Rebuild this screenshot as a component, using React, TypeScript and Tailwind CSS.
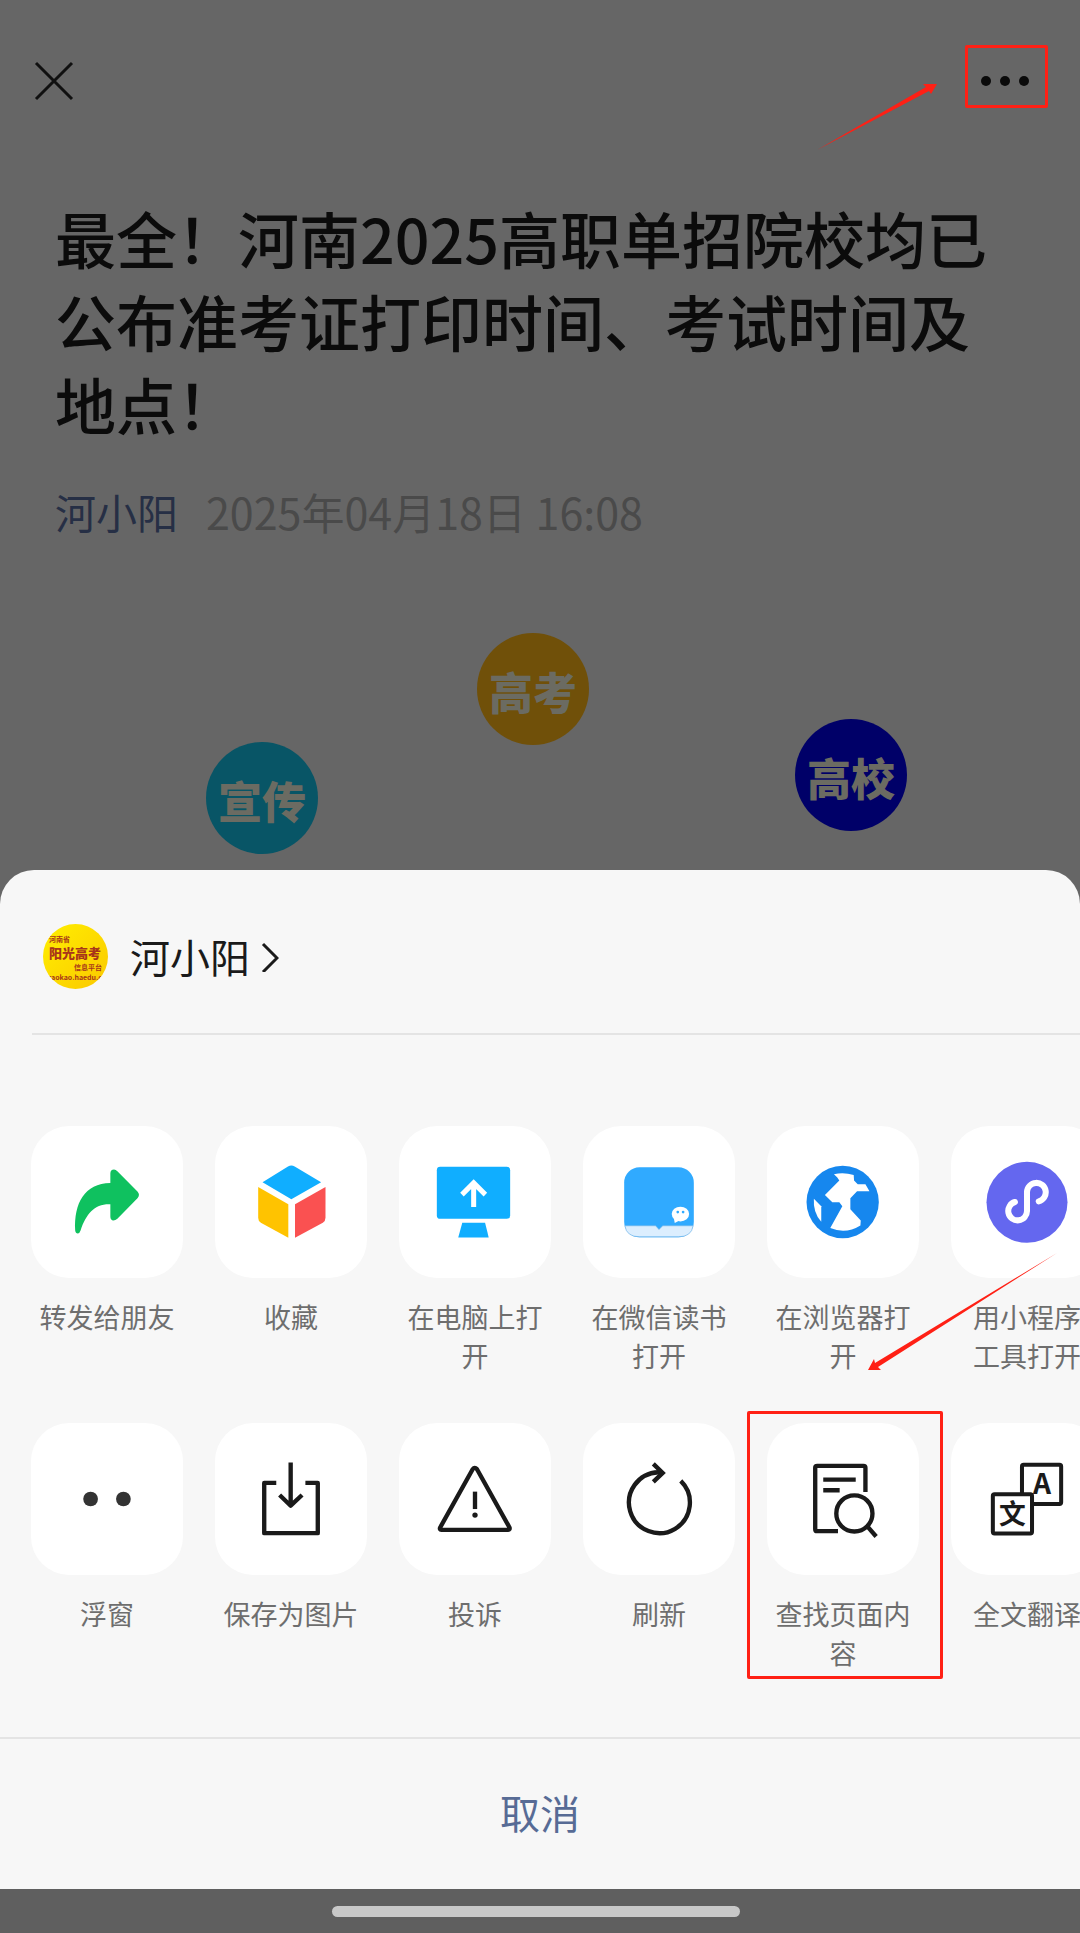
import React from 'react';

interface Action {
  label: string;
  icon: React.ReactNode;
  highlighted?: boolean;
}

const INK = '#1a1a1a';

const ShareIcon = () => (
  <path
    fill="#0fc15f"
    d="M237 170V142Q237 130 248 130Q253 130 258 135L318 196Q327 206 318 216L258 277Q252 282 246 282Q237 281 237 270V234C190 232 165 262 148 312Q145 321 140 321Q133 321 132 312C128 230 160 172 237 170Z"
  />
);

const FavoriteIcon = () => (
  <>
    <path fill="#10aeff" d="M142 168L218 121Q228 115 238 121L317 168L228 219Z" />
    <path fill="#ffc300" d="M129 182L219 234V334L137 289Q129 284 129 274Z" />
    <path fill="#fa5151" d="M330 182L239 234V334L322 289Q330 284 330 274Z" />
  </>
);

const DesktopIcon = () => (
  <>
    <rect x="113" y="122" width="219" height="155" rx="10" fill="#10aeff" />
    <path fill="#10aeff" d="M189 289H257L268 333H177Z" />
    <path d="M223 242V168M188 205L223 170L258 205" fill="none" stroke="#fff" strokeWidth="15" />
  </>
);

const ReadingIcon = () => (
  <>
    <rect x="123" y="123" width="208" height="209" rx="46" fill="#30aaff" />
    <path d="M125 298H217L227 309L238 298H329Q324 331 285 331H169Q130 331 125 298Z" fill="#dceefe" stroke="#70b4e8" strokeWidth="2" />
    <ellipse cx="291" cy="263" rx="26" ry="22" fill="#fff" />
    <path d="M271 274L274 290L288 282Z" fill="#fff" />
    <circle cx="283" cy="257" r="4" fill="#30aaff" />
    <circle cx="299" cy="257" r="4" fill="#30aaff" />
  </>
);

const BrowserIcon = () => (
  <>
    <circle cx="226" cy="227" r="108" fill="#1687ee" />
    <path
      fill="#fff"
      d="M200 144Q228 137 259 146L260 163L271 174H294L306 195H269L249 216V249L280 282L279 297Q236 324 189 305L225 240L216 228H195L173 206L216 163L210 154Z"
    />
    <path fill="#fff" d="M140 217L162 240V286Q137 258 140 217Z" />
  </>
);

const MiniProgramIcon = () => (
  <>
    <circle cx="227" cy="228" r="121" fill="#6467ef" />
    <path d="M191 227A28 28 0 1 0 227 253V197A28 28 0 1 1 262 225" fill="none" stroke="#fff" strokeWidth="18" strokeLinecap="round" />
  </>
);

const FloatIcon = () => (
  <>
    <circle cx="178" cy="227" r="22" fill="#333" />
    <circle cx="276" cy="227" r="22" fill="#333" />
  </>
);

const SaveIcon = () => (
  <g fill="none" stroke={INK} strokeWidth="13" strokeLinejoin="round">
    <path d="M183 179H147V329H307V179H270" />
    <path d="M226 118V246M193 215L226 247L260 215" />
  </g>
);

const ReportIcon = () => (
  <>
    <path d="M220 138Q226 130 233 138L330 312Q332 319 326 319H127Q120 318 123 312Z" fill="none" stroke={INK} strokeWidth="13" strokeLinejoin="round" />
    <path d="M227 205V257" stroke={INK} strokeWidth="13" />
    <circle cx="227" cy="275" r="8" fill={INK} />
  </>
);

const RefreshIcon = () => (
  <g fill="none" stroke={INK} strokeWidth="13">
    <path d="M292 173A91 91 0 1 1 225 147H236" />
    <path d="M210 122L238 149L210 176" />
  </g>
);

const FindIcon = () => (
  <g fill="none" stroke={INK} strokeWidth="13" strokeLinejoin="round">
    <path d="M294 206V134Q294 128 288 128H150Q144 128 144 134V317Q144 323 150 323H212" />
    <path d="M168 169H265M168 201H217" />
    <circle cx="261" cy="270" r="54" />
    <path d="M299 308L326 339" />
  </g>
);

const TranslateIcon = () => (
  <>
    <rect x="212" y="125" width="117" height="117" rx="5" fill="none" stroke={INK} strokeWidth="12" />
    <text x="272" y="213" fontSize="84" fontWeight="700" textAnchor="middle" fill={INK} fontFamily="'Noto Sans CJK SC', sans-serif">
      A
    </text>
    <rect x="125" y="213" width="117" height="117" rx="5" fill="#fff" stroke={INK} strokeWidth="12" />
    <text x="183" y="301" fontSize="80" fontWeight="700" textAnchor="middle" fill={INK} fontFamily="'Noto Sans CJK SC', sans-serif">
      文
    </text>
  </>
);

const shareActions: Action[] = [
  { label: '转发给朋友', icon: <ShareIcon /> },
  { label: '收藏', icon: <FavoriteIcon /> },
  { label: '在电脑上打开', icon: <DesktopIcon /> },
  { label: '在微信读书打开', icon: <ReadingIcon /> },
  { label: '在浏览器打开', icon: <BrowserIcon /> },
  { label: '用小程序\n工具打开', icon: <MiniProgramIcon /> },
];

const pageActions: Action[] = [
  { label: '浮窗', icon: <FloatIcon /> },
  { label: '保存为图片', icon: <SaveIcon /> },
  { label: '投诉', icon: <ReportIcon /> },
  { label: '刷新', icon: <RefreshIcon /> },
  { label: '查找页面内容', icon: <FindIcon />, highlighted: true },
  { label: '全文翻译', icon: <TranslateIcon /> },
];

const ActionItem: React.FC<{ action: Action }> = ({ action }) => (
  <li className="relative w-[152px] shrink-0">
    <button type="button" className="flex w-full flex-col items-center gap-[19px]">
      <span className="block size-[152px] rounded-[38px] bg-white">
        <svg viewBox="0 0 454 454" className="size-full" aria-hidden="true">
          {action.icon}
        </svg>
      </span>
      <span className="w-[136px] text-center text-[27px] leading-[39px] whitespace-pre-line text-[#6e6e6e]">{action.label}</span>
    </button>
    {action.highlighted && (
      <>
        <span className="pointer-events-none absolute -top-3 -left-5 h-[268px] w-[196px] rounded-xs border-3 border-[#ff2015]" />
        <svg viewBox="0 0 190 120" className="pointer-events-none absolute -top-[172px] left-[101px] h-[120px] w-[190px]" aria-hidden="true">
          <path d="M189 2L10 116L13 119L0 119L6 108L7 112Z" fill="#ff2015" />
        </svg>
      </>
    )}
  </li>
);

const ActionRow: React.FC<{ actions: Action[] }> = ({ actions }) => (
  <ul className="flex gap-8">
    {actions.map(action => (
      <ActionItem key={action.label} action={action} />
    ))}
  </ul>
);

const Avatar = () => (
  <svg viewBox="0 0 65 65" className="size-[65px] shrink-0 rounded-full" fontFamily="'Noto Sans CJK SC', sans-serif" fill="#a8361a" aria-hidden="true">
    <defs>
      <linearGradient id="sun" x1="0" y1="0" x2="1" y2="1">
        <stop offset="0" stopColor="#ffef00" />
        <stop offset="1" stopColor="#fbc800" />
      </linearGradient>
    </defs>
    <rect width="65" height="65" fill="url(#sun)" />
    <text x="6" y="18" fontSize="7" fontWeight="700" fontFamily="'Liberation Serif', 'Noto Sans CJK SC', serif">河南省</text>
    <text x="6" y="34" fontSize="13" fontWeight="900">阳光高考</text>
    <text x="31" y="46" fontSize="7" fontWeight="700">信息平台</text>
    <text x="4" y="56" fontSize="7" fontWeight="700">gaokao.haedu.cn</text>
  </svg>
);

const App: React.FC = () => {
  return (
    <div className="flex min-h-screen flex-col overflow-hidden bg-[#666666] font-['Noto_Sans_CJK_SC',sans-serif]">
      <header className="flex items-start justify-between pt-[45px] pr-8 pl-8">
        <button type="button" aria-label="关闭" className="mt-[13px]">
          <svg viewBox="0 0 44 44" className="size-11">
            <path d="M4 5L40 41M40 5L4 41" stroke="#101010" strokeWidth="3" />
          </svg>
        </button>
        <div className="relative">
          <button type="button" aria-label="更多" className="block h-[63px] w-[83px] rounded-xs border-3 border-[#ff2015]">
            <svg viewBox="0 0 77 57" className="size-full" fill="#0a0a0a">
              <circle cx="18" cy="33" r="5" />
              <circle cx="37" cy="33" r="5" />
              <circle cx="56" cy="33" r="5" />
            </svg>
          </button>
          <svg viewBox="0 0 120 68" className="pointer-events-none absolute top-[38px] -left-[148px] h-[68px] w-[120px]" aria-hidden="true">
            <path d="M0 67L109 4L106 1L120 1L114 11L112 8Z" fill="#ff2015" />
          </svg>
        </div>
      </header>

      <article className="pt-[88px]">
        <h1 className="px-[55px] text-[61px] leading-[83px] font-medium text-[#0b0b0b]">
          最全！河南2025高职单招院校均已公布准考证打印时间、考试时间及地点！
        </h1>
        <p className="mt-[34px] flex gap-7 px-[55px] leading-[64px]">
          <a href="#author" className="text-[41px] text-[#262f45]">河小阳</a>
          <time dateTime="2025-04-18T16:08" className="text-[43px] text-[#4a4a4a]">2025年04月18日 16:08</time>
        </p>
        <div className="mt-[90px] flex items-start pl-[206px] text-[44px] leading-[116px] font-black text-[#6b6b62]">
          <span className="mt-[109px] size-28 shrink-0 rounded-full bg-[#085566] text-center">宣传</span>
          <span className="ml-[159px] size-28 shrink-0 rounded-full bg-[#705009] text-center">高考</span>
          <span className="ml-[206px] mt-[86px] size-28 shrink-0 rounded-full bg-[#000068] text-center">高校</span>
        </div>
      </article>

      <section className="mt-auto rounded-t-[34px] bg-[#f7f7f7]">
        <div className="ml-8 border-b-2 border-[#e4e4e4] pt-[54px] pb-11 pl-[11px]">
          <a href="#account" className="flex items-center gap-[22px] text-[40px] leading-[62px] text-[#1a1a1a]">
            <Avatar />
            <span className="flex items-center gap-[11px] pb-[2px]">
              河小阳
              <svg viewBox="0 0 18 32" className="h-8 w-[18px]" aria-hidden="true">
                <path d="M2 4L16 18L2 32" fill="none" stroke="#1a1a1a" strokeWidth="3" />
              </svg>
            </span>
          </a>
        </div>
        <div className="flex flex-col gap-12 overflow-hidden pt-[91px] pb-[65px] pl-[31px]">
          <ActionRow actions={shareActions} />
          <ActionRow actions={pageActions} />
        </div>
        <button type="button" className="block h-[152px] w-full border-t-2 border-[#e4e4e4] pb-1 text-[40px] text-[#576b95]">
          取消
        </button>
      </section>

      <footer className="flex h-11 items-center justify-center bg-[#5f5f5f] pr-2">
        <span className="h-[11px] w-[38%] rounded-full bg-[#c8c8c8]" />
      </footer>
    </div>
  );
};

export default App;
